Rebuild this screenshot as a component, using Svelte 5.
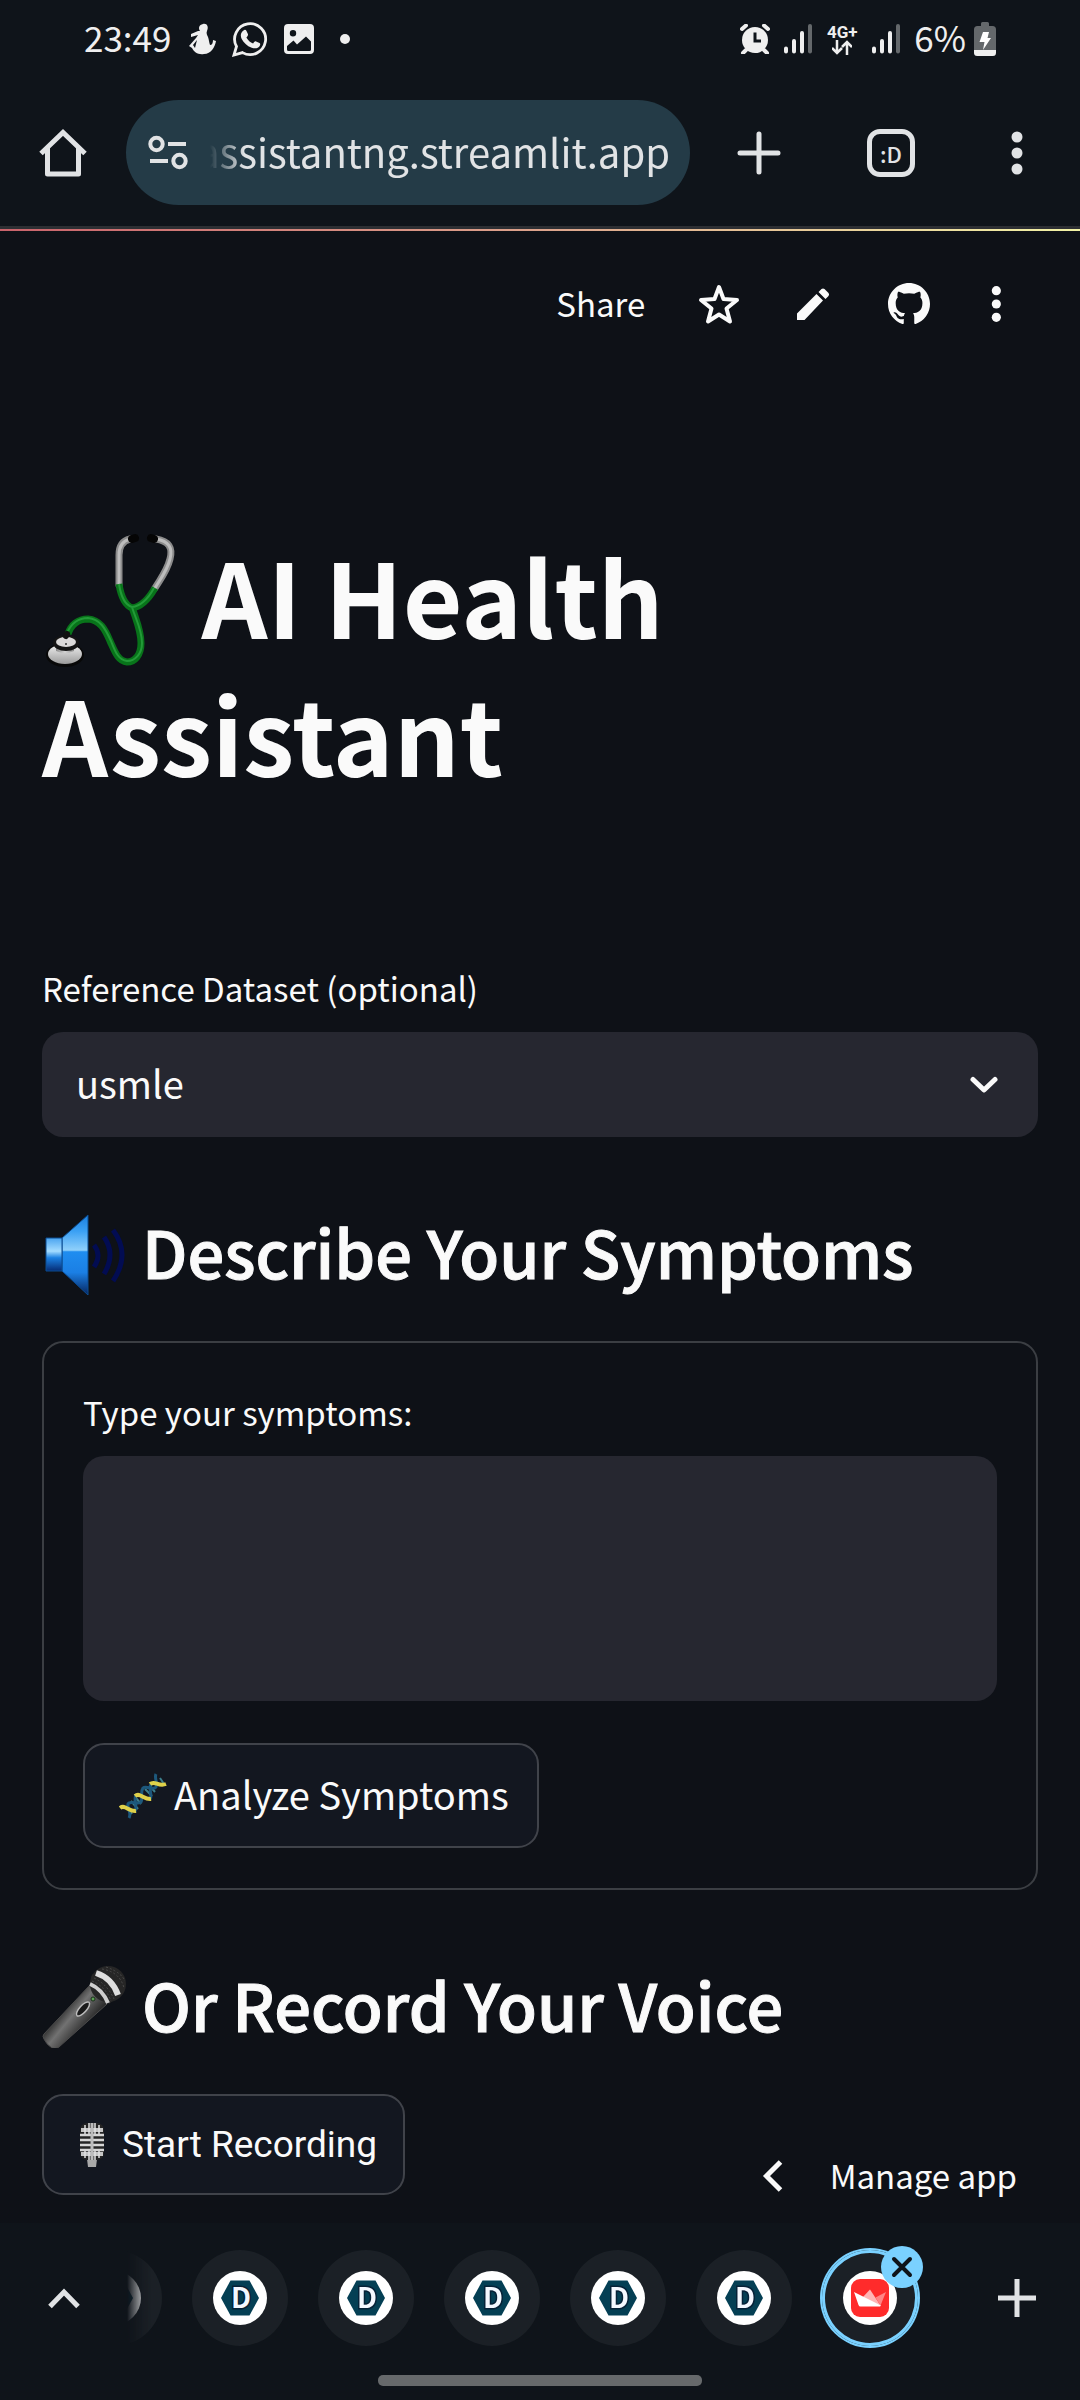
<script>
  let dataset = $state('usmle');
  let symptoms = $state('');
  let address = $state('assistantng.streamlit.app');
  const tabs = [1, 2, 3, 4, 5];
</script>

{#snippet signal()}
  <svg width="28" height="30" viewBox="1 0 28 30" stroke-width="4" stroke-linecap="round" aria-hidden="true">
    <path d="M3 24.500v3M11 17v10.500M19 9v18.500" stroke="#efefef" />
    <path d="M27 2v25.500" stroke="#64686b" />
  </svg>
{/snippet}

{#snippet dots(height)}
  <svg {height} viewBox="8 0 32 48" fill="currentColor" aria-hidden="true">
    <circle cx="24" cy="8" r="5.500" /><circle cx="24" cy="24" r="5.500" /><circle cx="24" cy="40" r="5.500" />
  </svg>
{/snippet}

<div class="screen">
  <header class="chrome">
    <div class="status">
      <div class="group left">
        <span class="clock">23:49</span>
        <svg width="27" height="32" viewBox="0 0 27 32" fill="#efefef" aria-hidden="true">
          <path d="M14 1C18 0 20 4 18 8C17 10 18 12 19 14C20 17 20 19 21 22C23 22 24 20 24 17L27 18C26 24 22 31 15 31C9 32 5 29 3 25L0 23L7 15L9 12L2 14L2 11L9 8L11 8C9 5 10 2 14 1ZM8 17L4 22L6 25Z" />
        </svg>
        <svg width="36" height="36" viewBox="0 0 36 36" aria-hidden="true">
          <path d="M2 34L4.500 25.500A15.500 15.500 0 1 1 10.500 31.600Z" fill="none" stroke="#efefef" stroke-width="2.800" />
          <path d="M11.500 9.500c1-1 2.500-.8 3 .4l1.400 3.200c.4.900-.2 1.700-1.500 3.300 1.800 3 3.700 4.700 6.700 6 1.200-1.600 2-2.500 3-2l3.400 1.700c1 .5.900 1.600.2 2.900-1.500 2.500-4.800 2.900-8 1.700-5-1.900-7.800-5-10-8.800-1.600-3-1-6.500 1.800-8.400Z" fill="#efefef" />
        </svg>
        <svg width="30" height="30" viewBox="0 0 30 30" aria-hidden="true">
          <path fill="#efefef" fill-rule="evenodd" d="M4 0h22a4 4 0 0 1 4 4v22a4 4 0 0 1-4 4H4a4 4 0 0 1-4-4V4a4 4 0 0 1 4-4ZM9 6a3.200 3.200 0 1 0 0 6.400A3.200 3.200 0 1 0 9 6ZM3 22v3.500q0 1.500 1.500 1.500h21q1.500 0 1.500-1.500V17.500L22 12.500l-9 8-3.500-4Z" />
        </svg>
        <span class="dot"></span>
      </div>
      <div class="group right">
        <svg width="30" height="30" viewBox="0 0 30 30" aria-hidden="true">
          <circle cx="15" cy="16" r="13" fill="#efefef" />
          <path d="M2 5l4-3.500M28 5l-4-3.500M6 26l-3 3M24 26l3 3" stroke="#efefef" stroke-width="4" stroke-linecap="round" />
          <path d="M15 8.500v8.500h6" fill="none" stroke="#0f141a" stroke-width="3" />
        </svg>
        {@render signal()}
        <span class="network">
          <span>4G+</span>
          <svg width="20" height="15" viewBox="0 0 20 15" fill="none" stroke="#efefef" stroke-width="2.500" aria-hidden="true">
            <path d="M5 0v13M0 8l5 5 5-5M15 15V2M10 7l5-5 5 5" />
          </svg>
        </span>
        {@render signal()}
        <span class="clock">6%</span>
        <svg width="22" height="34" viewBox="0 0 22 34" aria-hidden="true">
          <path d="M7 1.500Q7 0 8.500 0h5Q15 0 15 1.500V4h3.500Q22 4 22 7.500V30.500Q22 34 18.500 34H3.500Q0 34 0 30.500V7.500Q0 4 3.500 4H7Z" fill="#64686b" />
          <path d="M0 28h22v2.500Q22 34 18.500 34H3.500Q0 34 0 30.500Z" fill="#efefef" />
          <path d="M9 10h6l-1.500 6H17L9 28l1.500-8H5.500Z" fill="#fff" />
        </svg>
      </div>
    </div>

    <div class="toolbar">
      <button class="icon" aria-label="Home">
        <svg width="50" height="50" viewBox="0 0 50 50" fill="none" stroke="currentColor" stroke-width="5" stroke-linejoin="round" aria-hidden="true">
          <path d="M3 25.500 25 4.500 47 25.500" stroke-linejoin="miter" />
          <path d="M9.500 20v26h31V20" />
        </svg>
      </button>
      <div class="address">
        <svg width="40" height="36" viewBox="0 0 40 36" fill="none" stroke="currentColor" stroke-width="4" aria-hidden="true">
          <circle cx="8.500" cy="9" r="6.200" /><path d="M20 9h18M2 26h18" /><circle cx="31.500" cy="26" r="6.200" />
        </svg>
        <input aria-label="Address" bind:value={address} />
      </div>
      <button class="icon wide" aria-label="New tab">
        <svg width="44" height="44" viewBox="0 0 44 44" stroke="currentColor" stroke-width="5" stroke-linecap="round" aria-hidden="true"><path d="M22 3v38M3 22h38" /></svg>
      </button>
      <button class="icon" aria-label="Switch tabs"><span class="tabcount">:D</span></button>
      <button class="icon" aria-label="Browser menu">{@render dots(48)}</button>
    </div>
    <div class="rainbow"></div>
  </header>

  <main>
    <nav class="appbar">
      <button class="share">Share</button>
      <button aria-label="Favorite">
        <svg width="42" height="42" viewBox="0 0 42 42" fill="none" stroke="currentColor" stroke-width="4" stroke-linejoin="round" aria-hidden="true">
          <path d="M21 4 25.500 16 39 17 28.500 25.500 32 38.500 21 31.500 10 38.500 13.500 25.500 3 17 16.500 16Z" />
        </svg>
      </button>
      <button aria-label="Edit">
        <svg width="42" height="42" viewBox="0 0 42 42" fill="currentColor" aria-hidden="true">
          <path d="M4 30.500 23.500 11l6.500 6.500L11.500 37H4ZM25.500 9l3-3q1.500-1.200 3 0l4 4q1.200 1.500 0 3l-3 3Z" />
        </svg>
      </button>
      <button aria-label="GitHub">
        <svg width="42" height="42" viewBox="0 0 16 16" fill="currentColor" aria-hidden="true">
          <path d="M8 0C3.580 0 0 3.580 0 8c0 3.540 2.290 6.530 5.470 7.590.4.070.55-.17.55-.38 0-.19-.01-.82-.01-1.490-2.010.37-2.530-.49-2.690-.94-.09-.23-.48-.94-.82-1.130-.28-.15-.68-.52-.01-.53.63-.01 1.080.58 1.230.82.72 1.210 1.870.87 2.330.66.07-.52.28-.87.51-1.070-1.780-.2-3.640-.89-3.640-3.950 0-.87.31-1.590.82-2.150-.08-.2-.36-1.020.08-2.120 0 0 .67-.21 2.200.82.64-.18 1.320-.27 2-.27s1.360.09 2 .27c1.530-1.040 2.200-.82 2.200-.82.44 1.100.16 1.920.08 2.120.51.56.82 1.270.82 2.150 0 3.070-1.870 3.750-3.650 3.950.29.25.54.73.54 1.480 0 1.070-.01 1.930-.01 2.200 0 .21.15.46.55.38A8.010 8.010 0 0 0 16 8c0-4.420-3.580-8-8-8Z" />
        </svg>
      </button>
      <button aria-label="App menu">{@render dots(40)}</button>
    </nav>

    <h1>
      <svg width="136" height="136" viewBox="0 0 136 136" fill="none" stroke-linecap="round" aria-hidden="true">
        <defs>
          <linearGradient id="steel" x1="0" x2="1"><stop offset="0" stop-color="#8a8a8a" /><stop offset=".5" stop-color="#d4d4d4" /><stop offset="1" stop-color="#8a8a8a" /></linearGradient>
          <linearGradient id="bell" x1="0" x2="0" y1="0" y2="1"><stop offset="0" stop-color="#f2f2f2" /><stop offset="1" stop-color="#9b9b9b" /></linearGradient>
        </defs>
        <path d="M88 6C80 8 77 14 77 22V52M114 6C127 8 131 15 128 26C125 38 119 45 113 55" stroke="#8b8b8b" stroke-width="7" />
        <path d="M88 6C80 8 77 14 77 22V52M114 6C127 8 131 15 128 26C125 38 119 45 113 55" stroke="#bdbdbd" stroke-width="3" />
        <path d="M90 6l3-1M112 6l-3-1" stroke="#050505" stroke-width="8" />
        <g stroke-linecap="butt">
          <path d="M77 51C79 64 83 72 90 75C99 74 106 67 113 55M90 74C94 87 99 97 99 110C99 122 93 129 85 129C76 128 73 119 68 108C63 96 58 87 46 86C36 86 29 92 26 101" stroke="#08741a" stroke-width="7" />
          <path d="M77 51C79 64 83 72 90 74C99 73 106 66 112 55M90 74C94 87 100 97 100 110C100 121 93 128 85 128C76 127 73 118 69 108C63 95 58 86 46 85C36 85 29 91 25 100" stroke="#239a38" stroke-width="2" />
        </g>
        <ellipse cx="23" cy="122" rx="19" ry="12" fill="#080808" />
        <ellipse cx="23" cy="121" rx="17" ry="10" fill="url(#bell)" />
        <path d="M14 112h18v6q-9 4-18 0Z" fill="url(#steel)" />
        <ellipse cx="24" cy="110" rx="13" ry="8" fill="#151515" />
        <ellipse cx="24" cy="109" rx="10" ry="5" fill="#dcdada" />
        <circle cx="24" cy="111" r="1" fill="#333" />
        <path d="M25 101l-1 2" stroke="#111" stroke-width="6" />
      </svg>
      AI Health Assistant
    </h1>

    <label for="dataset">Reference Dataset (optional)</label>
    <div class="select">
      <select id="dataset" bind:value={dataset}><option value="usmle">usmle</option></select>
      <svg width="30" height="18" viewBox="0 0 30 18" fill="none" stroke="#fafafa" stroke-width="5" stroke-linecap="round" stroke-linejoin="round" aria-hidden="true"><path d="M4 3.500 15 14 26 3.500" /></svg>
    </div>

    <h2>
      <svg width="84" height="84" viewBox="0 0 84 84" aria-hidden="true">
        <defs>
          <linearGradient id="cone" x1="0" x2="0" y1="0" y2="1"><stop offset="0" stop-color="#1a7fe0" /><stop offset=".2" stop-color="#3aa0f4" /><stop offset=".44" stop-color="#8fd0fa" /><stop offset=".46" stop-color="#1f8df0" /><stop offset=".72" stop-color="#1b7fe4" /><stop offset="1" stop-color="#06245e" /></linearGradient>
          <linearGradient id="box" x1="0" x2="0" y1="0" y2="1"><stop offset="0" stop-color="#4aa4f0" /><stop offset=".4" stop-color="#a4dcff" /><stop offset=".6" stop-color="#1b80e2" /><stop offset="1" stop-color="#062c74" /></linearGradient>
        </defs>
        <path d="M20 27 46 4V84L20 60Z" fill="url(#cone)" stroke="#0b4c92" />
        <path d="M4 27h16v33H4Z" fill="url(#box)" stroke="#0b4c92" />
        <g fill="none" stroke="#020c52" stroke-width="5"><path d="M52 34q8 10 0 22M62 26q12 17 0 37M71 19q18 24 0 51" /></g>
      </svg>
      <span>Describe Your Symptoms</span>
    </h2>

    <form onsubmit={(e) => e.preventDefault()}>
      <label for="symptoms">Type your symptoms:</label>
      <textarea id="symptoms" bind:value={symptoms}></textarea>
      <button class="btn analyze">
        <svg width="48" height="48" viewBox="0 0 48 48" fill="none" aria-hidden="true">
          <path d="M12 29l7 8M17 26l5 6M26 17l7 7M31 14l5 6M7 34l6 8M41 6l4 6" stroke="#3d7f8c" stroke-width="2" />
          <path d="M10 46C13 41 8 36 9 32C11 28 20 33 22 30C24 26 21 20 24 16C27 13 35 19 37 15C39 11 35 6 37 2" stroke="#1d587c" stroke-width="3" />
          <path d="M16 39C19 35 14 28 17 23M31 27C34 23 29 18 32 12" stroke="#1d587c" stroke-width="3" />
          <path d="M1 36C6 32 10 40 17 39M16 24C21 20 25 28 32 27M31 12C36 8 39 15 47 12" stroke="#dfd14a" stroke-width="4" />
        </svg>
        <span>Analyze Symptoms</span>
      </button>
    </form>

    <h2>
      <svg width="84" height="84" viewBox="0 0 84 84" aria-hidden="true">
        <defs>
          <linearGradient id="handle" x1="22" y1="46" x2="44" y2="64" gradientUnits="userSpaceOnUse"><stop offset="0" stop-color="#383838" /><stop offset=".35" stop-color="#727272" /><stop offset="1" stop-color="#2a2a2a" /></linearGradient>
        </defs>
        <path d="M47 22 65 40 17 83Q13 86 10 84Q4 80 2 75Q0 72 2 70Z" fill="url(#handle)" stroke="#4b4b4b" />
        <circle cx="66" cy="20" r="18" fill="#262626" />
        <path d="M50 10 77 32 67 40 48 20Z" fill="#262626" />
        <g stroke="#4a4a4a" stroke-width="1" stroke-dasharray="2 2" fill="none"><path d="M60 5q18 3 22 19M64 3q15 5 19 14M52 14q13 6 20 21M50 17q14 6 19 20" /></g>
        <path d="M54 9Q70 14 76 31" fill="none" stroke="#dedede" stroke-width="6" />
        <path d="M48 20Q60 25 66 39" fill="none" stroke="#cfcfcf" stroke-width="4" />
        <ellipse cx="41" cy="45" rx="3.500" ry="9" fill="#1b1b1b" stroke="#bdbdbd" stroke-width="1.500" transform="rotate(42 41 45)" />
        <circle cx="51" cy="35" r="2" fill="#5aa055" stroke="#1b301a" />
      </svg>
      <span>Or Record Your Voice</span>
    </h2>

    <div class="actions">
      <button class="btn record">
        <svg width="24" height="44" viewBox="0 0 24 44" aria-hidden="true">
          <path d="M7 36h10l-1 8H8Z" fill="#a9a9a9" />
          <rect width="24" height="37" rx="7" fill="#242424" />
          <path d="M0 12h24M0 17h24M0 22h24M0 27h24" stroke="#d6d6d6" stroke-width="2.500" />
          <path d="M1 7h22M1 31h22" stroke="#c6c6c6" stroke-width="4" />
          <path d="M5 2v9M9 0v11M15 0v11M19 2v9M5 28v7M9 28v9M15 28v9M19 28v7" stroke="#e2e2e2" stroke-width="1.500" />
          <path d="M12 0v37" stroke="#bcbcbc" stroke-width="3" />
        </svg>
        <span>Start Recording</span>
      </button>
      <button class="manage">
        <svg width="22" height="34" viewBox="0 0 22 34" fill="none" stroke="currentColor" stroke-width="5" aria-hidden="true"><path d="M18.500 3 4.500 17l14 14" /></svg>
        <span>Manage app</span>
      </button>
    </div>
  </main>

  <footer>
    <div class="tabs">
      <button class="end" aria-label="Show tab group">
        <svg width="32" height="22" viewBox="0 0 32 22" fill="none" stroke="currentColor" stroke-width="5" aria-hidden="true"><path d="M2 19.500 16 5l14 14.500" /></svg>
      </button>
      <div class="strip">
        <button class="tab" aria-label="Earlier tab">
          <svg width="54" height="54" viewBox="0 0 54 54" aria-hidden="true"><circle cx="27" cy="27" r="27" fill="#fff" /><path d="M8 27 17.500 9.500h19L46 27l-9.500 17.500h-19Z" fill="#043f54" /></svg>
        </button>
        {#each tabs as tab (tab)}
          <button class="tab" aria-label={`Tab ${tab}`}>
            <svg width="54" height="54" viewBox="0 0 54 54" aria-hidden="true">
              <circle cx="27" cy="27" r="27" fill="#fff" />
              <path d="M8 27 17.500 9.500h19L46 27l-9.500 17.500h-19Z" fill="#043f54" />
              <text class="mark" x="28" y="37" text-anchor="middle">D</text>
            </svg>
          </button>
        {/each}
        <div class="current">
          <button class="tab active" aria-label="AI Health Assistant">
            <svg width="54" height="54" viewBox="0 0 54 54" aria-hidden="true">
              <circle cx="27" cy="27" r="27" fill="#fff" />
              <rect x="8" y="8" width="38" height="38" rx="9" fill="#ff2b2b" />
              <path d="M27 18.500 37.500 34.500 19 27Z" fill="#ffb5b5" />
              <path d="M43 21 37.500 34.500 32.500 26.500Z" fill="#ff8585" />
              <path d="M11 21 38 34.500 37 35.500H17.500Q16 35.500 15.500 34Z" fill="#fff" />
            </svg>
          </button>
          <button class="close" aria-label="Close tab">
            <svg width="22" height="22" viewBox="0 0 22 22" stroke="#0f141a" stroke-width="4" stroke-linecap="round" aria-hidden="true"><path d="M3 3l16 16M19 3 3 19" /></svg>
          </button>
        </div>
      </div>
      <button class="end" aria-label="New tab in group">
        <svg width="38" height="38" viewBox="0 0 38 38" stroke="currentColor" stroke-width="5" aria-hidden="true"><path d="M19 0v38M0 19h38" /></svg>
      </button>
    </div>
    <div class="handle"></div>
  </footer>
</div>

<style>
  :global(body) { margin: 0; background: #0e1117; }
  .screen {
    display: flex;
    flex-direction: column;
    min-height: 100vh;
    color: #fafafa;
    font-family: "Noto Sans CJK JP", "Noto Sans", sans-serif;
  }
  button, input, select, textarea { font: inherit; color: inherit; margin: 0; border: 0; background: none; padding: 0; box-sizing: border-box; }
  button { display: flex; align-items: center; justify-content: center; cursor: pointer; }
  svg { flex: none; display: block; }

  .chrome, footer { background: #0f141a; color: #e1e3e5; }
  .status { display: flex; justify-content: space-between; align-items: center; height: 78px; padding: 0 84px; color: #efefef; }
  .group { display: flex; align-items: center; gap: 16px; }
  .group.left .clock { margin-right: 2px; }
  .group.right { gap: 14px; }
  .group.right .clock { margin-right: -6px; }
  .clock { font-size: 35px; line-height: 44px; padding-bottom: 4px; }
  .dot { width: 10px; height: 10px; margin-left: 10px; border-radius: 50%; background: #efefef; }
  .network { display: flex; flex-direction: column; align-items: center; width: 32px; font: 700 17px/16px Roboto, sans-serif; }

  .toolbar { display: flex; align-items: center; padding: 22px 0 21px; }
  .icon { width: 126px; height: 84px; }
  .wide { width: 138px; }
  .address { flex: 1; display: flex; align-items: center; height: 105px; padding: 0 20px 0 22px; border-radius: 53px; background: #243b47; min-width: 0; box-sizing: border-box; }
  .address input {
    flex: 1;
    min-width: 0;
    height: 70px;
    padding-bottom: 4px;
    font-size: 40px;
    text-align: right;
    outline: none;
    mask-image: linear-gradient(to right, transparent 22px, #000 56px);
  }
  .tabcount { display: flex; align-items: center; justify-content: center; width: 48px; height: 48px; box-sizing: border-box; border: 5px solid; border-radius: 13px; font-size: 22px; line-height: 30px; font-weight: 500; }
  .rainbow { height: 2px; border-top: 3px solid #2d2f33; background: linear-gradient(to right, #c9636b, #dca38c 50%, #f2f3a6); }

  main { flex: 1; padding: 0 42px 28px; }
  .appbar { display: flex; justify-content: flex-end; align-items: center; height: 146px; padding-right: 28px; gap: 53px; }
  .share { padding-bottom: 2px; font-size: 33px; line-height: 46px; }
  h1 { margin: 149px 0 163px; font-size: 103px; line-height: 138px; font-weight: 700; }
  h1 svg { display: inline-block; margin: -20px 0; vertical-align: -10px; }
  h2 { display: flex; align-items: flex-end; gap: 16px; margin: 70px 0 46px; font-size: 65px; line-height: 88px; font-weight: 500; -webkit-text-stroke: 1px; }
  label { display: block; margin-bottom: 21px; font-size: 33px; line-height: 46px; }
  .select { display: grid; align-items: center; border-radius: 21px; background: #262730; }
  .select select { grid-area: 1 / 1; width: 100%; height: 105px; padding: 0 34px 4px; font-size: 38px; appearance: none; border-radius: 21px; }
  .select option { background: #262730; }
  .select svg { grid-area: 1 / 1; justify-self: end; margin-right: 39px; pointer-events: none; }
  form { padding: 46px 39px 40px; border: 2px solid #3b3e43; border-radius: 21px; }
  textarea { display: block; width: 100%; height: 245px; margin-bottom: 42px; padding: 20px 34px; border-radius: 21px; background: #262730; font-size: 38px; resize: none; }
  .btn { border: 2px solid #40434a; border-radius: 21px; background: #131720; }
  .analyze { height: 105px; padding: 0 28px 0 34px; gap: 7px; font-size: 38px; }
  .analyze span { padding-bottom: 4px; }
  .actions { display: flex; justify-content: space-between; align-items: flex-end; }
  .record { height: 101px; padding: 0 26px 0 36px; gap: 18px; font: 37px/44px Roboto, sans-serif; }
  .manage { gap: 46px; padding: 0 21px 0 0; height: 38px; font-size: 33px; line-height: 38px; }
  .manage span { padding-bottom: 2px; }

  .tabs { display: flex; align-items: center; height: 150px; }
  .end { width: 127px; height: 96px; }
  .strip {
    flex: 1;
    min-width: 0;
    display: flex;
    justify-content: flex-end;
    align-items: center;
    gap: 30px;
    height: 150px;
    padding-right: 35px;
    overflow: hidden;
    mask-image: linear-gradient(to right, transparent, #000 24px);
  }
  .tab { flex: none; width: 96px; height: 96px; border-radius: 50%; background: #1b2026; }
  .active { box-shadow: 0 0 0 2px #7ad1ff, inset 0 0 0 3px #7ad1ff; }
  .mark { font: 700 28px "Noto Sans CJK JP", sans-serif; fill: #f4f8ff; stroke: #062238; stroke-width: 3px; paint-order: stroke; }
  .current { position: relative; flex: none; }
  .close { position: absolute; top: -4px; right: -5px; width: 42px; height: 42px; border-radius: 50%; background: #7ad1ff; }
  .handle { width: 30%; height: 11px; margin: 2px auto 14px; border-radius: 5px; background: #66696b; }
</style>
